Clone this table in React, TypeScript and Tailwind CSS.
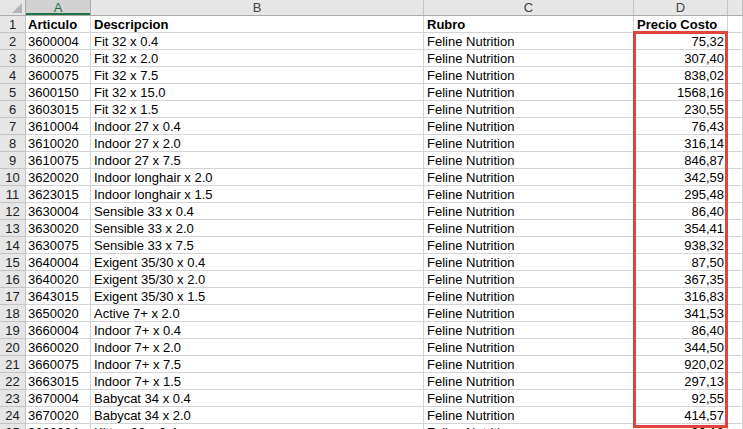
import React from "react";

const rows: [string, string, string, string][] = [
  ["3600004", "Fit 32 x 0.4", "Feline Nutrition", "75,32"],
  ["3600020", "Fit 32 x 2.0", "Feline Nutrition", "307,40"],
  ["3600075", "Fit 32 x 7.5", "Feline Nutrition", "838,02"],
  ["3600150", "Fit 32 x 15.0", "Feline Nutrition", "1568,16"],
  ["3603015", "Fit 32 x 1.5", "Feline Nutrition", "230,55"],
  ["3610004", "Indoor 27 x 0.4", "Feline Nutrition", "76,43"],
  ["3610020", "Indoor 27 x 2.0", "Feline Nutrition", "316,14"],
  ["3610075", "Indoor 27 x 7.5", "Feline Nutrition", "846,87"],
  ["3620020", "Indoor longhair x 2.0", "Feline Nutrition", "342,59"],
  ["3623015", "Indoor longhair x 1.5", "Feline Nutrition", "295,48"],
  ["3630004", "Sensible 33 x 0.4", "Feline Nutrition", "86,40"],
  ["3630020", "Sensible 33 x 2.0", "Feline Nutrition", "354,41"],
  ["3630075", "Sensible 33 x 7.5", "Feline Nutrition", "938,32"],
  ["3640004", "Exigent 35/30 x 0.4", "Feline Nutrition", "87,50"],
  ["3640020", "Exigent 35/30 x 2.0", "Feline Nutrition", "367,35"],
  ["3643015", "Exigent 35/30 x 1.5", "Feline Nutrition", "316,83"],
  ["3650020", "Active 7+ x 2.0", "Feline Nutrition", "341,53"],
  ["3660004", "Indoor 7+ x 0.4", "Feline Nutrition", "86,40"],
  ["3660020", "Indoor 7+ x 2.0", "Feline Nutrition", "344,50"],
  ["3660075", "Indoor 7+ x 7.5", "Feline Nutrition", "920,02"],
  ["3663015", "Indoor 7+ x 1.5", "Feline Nutrition", "297,13"],
  ["3670004", "Babycat 34 x 0.4", "Feline Nutrition", "92,55"],
  ["3670020", "Babycat 34 x 2.0", "Feline Nutrition", "414,57"],
  ["3680004", "Kitten 36 x 0.4", "Feline Nutrition", "90,12"],
];

const cols = "grid grid-cols-[26px_65px_333px_210px_94px_1fr]";
const cell = "h-[17px] pt-px border-r border-b border-[#d4d4d4] leading-[16px] text-[13px] text-black whitespace-nowrap overflow-hidden";
const rowHead = "h-[17px] pt-px border-r border-b border-[#c4c4c4] bg-[#e6e6e6] text-center leading-[16px] text-[13px] text-[#222]";

export default function App() {
  return (
    <div
      className="relative w-[743px] h-[429px] overflow-hidden bg-white"
      style={{ fontFamily: '"Liberation Sans", Arial, sans-serif' }}
    >
      {/* column letters */}
      <div className={`${cols} h-4 bg-[#e6e6e6] border-b border-[#ababab]`}>
        <div className="relative border-r border-[#ababab]">
          <svg className="absolute right-[3px] bottom-[2px]" width="10" height="10" viewBox="0 0 10 10">
            <path d="M10 0 L10 10 L0 10 Z" fill="#b4b4b4" />
          </svg>
        </div>
        <div className="bg-[#d2d2d2] border-r border-[#ababab] text-center text-[13px] leading-[15px] text-[#217346] shadow-[inset_0_-2px_0_#217346]">
          A
        </div>
        {["B", "C", "D", ""].map((l, i) => (
          <div
            key={i}
            className="border-r border-[#c4c4c4] text-center text-[13px] leading-[15px] text-[#444]"
          >
            {l}
          </div>
        ))}
      </div>

      {/* header row */}
      <div className={cols}>
        <div className={rowHead}>1</div>
        <div className={`${cell} pl-[2px] font-bold`}>Articulo</div>
        <div className={`${cell} pl-[3px] font-bold`}>Descripcion</div>
        <div className={`${cell} pl-[3px] font-bold`}>Rubro</div>
        <div className={`${cell} pl-[3px] font-bold`}>Precio Costo</div>
        <div className={cell}></div>
      </div>

      {rows.map((r, i) => (
        <div key={r[0]} className={cols}>
          <div className={rowHead}>{i + 2}</div>
          <div className={`${cell} pl-[2px]`}>{r[0]}</div>
          <div className={`${cell} pl-[3px]`}>{r[1]}</div>
          <div className={`${cell} pl-[3px]`}>{r[2]}</div>
          <div className={`${cell} pr-[3px] text-right`}>{r[3]}</div>
          <div className={cell}></div>
        </div>
      ))}

      {/* red highlight around price column */}
      <div className="absolute left-[633px] top-[31px] w-[95px] h-[397px] border-[3px] border-[#e0443c] pointer-events-none" />
    </div>
  );
}
